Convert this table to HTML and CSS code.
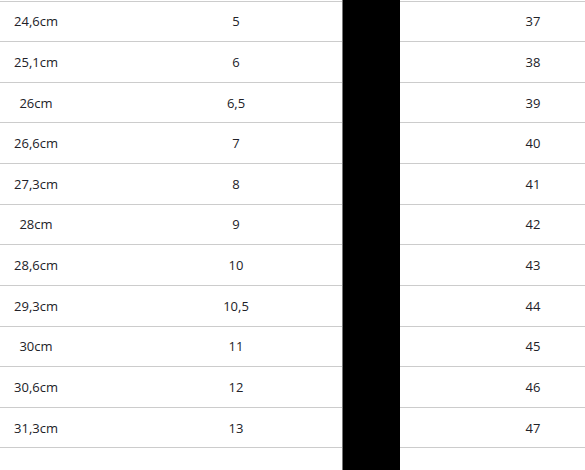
FILE: index.html
```html
<!DOCTYPE html>
<html>
<head>
<meta charset="utf-8">
<link rel="stylesheet" href="styles.css">
</head>
<body>
<div class="page">
  <div class="table">
    <div class="row first"><div class="c1">24,6cm</div><div class="c2">5</div><div class="c3">37</div></div>
    <div class="row"><div class="c1">25,1cm</div><div class="c2">6</div><div class="c3">38</div></div>
    <div class="row"><div class="c1">26cm</div><div class="c2">6,5</div><div class="c3">39</div></div>
    <div class="row"><div class="c1">26,6cm</div><div class="c2">7</div><div class="c3">40</div></div>
    <div class="row"><div class="c1">27,3cm</div><div class="c2">8</div><div class="c3">41</div></div>
    <div class="row"><div class="c1">28cm</div><div class="c2">9</div><div class="c3">42</div></div>
    <div class="row"><div class="c1">28,6cm</div><div class="c2">10</div><div class="c3">43</div></div>
    <div class="row"><div class="c1">29,3cm</div><div class="c2">10,5</div><div class="c3">44</div></div>
    <div class="row"><div class="c1">30cm</div><div class="c2">11</div><div class="c3">45</div></div>
    <div class="row"><div class="c1">30,6cm</div><div class="c2">12</div><div class="c3">46</div></div>
    <div class="row"><div class="c1">31,3cm</div><div class="c2">13</div><div class="c3">47</div></div>
  </div>
  <div class="redact"></div>
</div>
</body>
</html>
```
FILE: styles.css
```css
html, body {
  margin: 0;
  padding: 0;
  background: #ffffff;
}
.page {
  position: relative;
  width: 585px;
  height: 470px;
  overflow: hidden;
  font-family: "Open Sans", "Noto Sans", sans-serif;
  font-size: 13px;
  color: #222228;
}
.table {
  display: flex;
  flex-direction: column;
  width: 666px;
  padding-top: 0.5px;
}
.row {
  display: grid;
  grid-template-columns: 72px 328px 266px;
  height: 39.64px;
  border-bottom: 1px solid #cccccc;
  align-items: center;
  text-align: center;
}
.row.first {
  border-top: 1px solid #cccccc;
}
.redact {
  position: absolute;
  left: 342px;
  top: 0;
  width: 57px;
  height: 470px;
  background: #000;
  border-left: 1px solid #777;
}
```
